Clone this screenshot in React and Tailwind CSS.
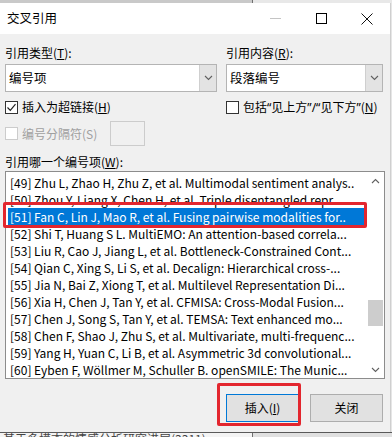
import React from 'react';

const items = [
  '[49] Zhu L, Zhao H, Zhu Z, et al. Multimodal sentiment analys..',
  '[50] Zhou Y, Liang X, Chen H, et al. Triple disentangled repr...',
  '[51] Fan C, Lin J, Mao R, et al. Fusing pairwise modalities for..',
  '[52] Shi T, Huang S L. MultiEMO: An attention-based correla...',
  '[53] Liu R, Cao J, Jiang L, et al. Bottleneck-Constrained Cont...',
  '[54] Qian C, Xing S, Li S, et al. Decalign: Hierarchical cross-...',
  '[55] Jia N, Bai Z, Xiong T, et al. Multilevel Representation Di...',
  '[56] Xia H, Chen J, Tan Y, et al. CFMISA: Cross-Modal Fusion...',
  '[57] Chen J, Song S, Tan Y, et al. TEMSA: Text enhanced mo...',
  '[58] Chen F, Shao J, Zhu S, et al. Multivariate, multi-frequenc...',
  '[59] Yang H, Yuan C, Li B, et al. Asymmetric 3d convolutional...',
  '[60] Eyben F, Wöllmer M, Schuller B. openSMILE: The Munic...',
];

function Chevron({ up }) {
  return (
    <svg width="9" height="6" viewBox="0 0 9 6">
      <path
        d={up ? 'M1 5 L4.5 1.5 L8 5' : 'M1 1 L4.5 4.5 L8 1'}
        fill="none"
        stroke="#606060"
        strokeWidth="1.1"
      />
    </svg>
  );
}

function Select({ value, width }) {
  return (
    <div className={`${width} h-[28px] flex border border-[#b4b4b4] bg-white`}>
      <div className="flex-1 flex items-center pl-[3px] text-[12.5px] text-black">{value}</div>
      <div className="w-[17px] flex items-center justify-center bg-[#e3e3e3] border-l border-[#cfcfcf]">
        <Chevron />
      </div>
    </div>
  );
}

function Checkbox({ checked, disabled }) {
  return (
    <div
      className={`w-[13px] h-[13px] shrink-0 border bg-white flex items-center justify-center ${
        disabled ? 'border-[#cccccc] bg-[#f0f0f0]' : 'border-[#333333]'
      }`}
    >
      {checked && (
        <svg width="11" height="11" viewBox="0 0 11 11">
          <path d="M1.5 5.5 L4.3 8.3 L9.5 2.2" fill="none" stroke="#222" strokeWidth="1.2" />
        </svg>
      )}
    </div>
  );
}

// narrow quote marks, as in the Windows UI font
const Q = ({ children }) => <span style={{ fontFamily: '"Noto Sans", sans-serif' }}>{children}</span>;

export default function App() {
  return (
    <div
      className="w-[392px] h-[437px] overflow-hidden flex flex-col bg-[#e6e6e6] relative text-black"
      style={{ fontFamily: '"Noto Sans CJK SC", "Noto Sans", sans-serif' }}
    >
      <div className="h-[3px] flex shrink-0">
        <div className="w-[252px] bg-[#c9c9c9]" />
        <div className="w-px bg-[#707070]" />
        <div className="flex-1 bg-[#e8e8e8]" />
      </div>

      <div className="h-[429px] w-[391px] flex flex-col border-r border-[#cfcfcf] shrink-0">
        {/* title bar */}
        <div className="h-[31px] bg-white flex items-center shrink-0">
          <span className="pl-[7px] text-[12.5px]">交叉引用</span>
          <div className="ml-auto flex h-full">
            <div className="w-[46px] flex items-center justify-center">
              <div className="w-[11px] h-px bg-[#c4c4c4]" />
            </div>
            <div className="w-[46px] flex items-center justify-center">
              <div className="w-[11px] h-[11px] border border-black" />
            </div>
            <div className="w-[46px] flex items-center justify-center">
              <svg width="12" height="12" viewBox="0 0 12 12">
                <path d="M0.5 0.5 L11.5 11.5 M11.5 0.5 L0.5 11.5" stroke="#111" strokeWidth="1" />
              </svg>
            </div>
          </div>
        </div>

        {/* body */}
        <div className="flex-1 bg-[#f0f0f0] pl-[5px] pt-[10px] flex flex-col text-[12px]">
          <div className="flex gap-[9px]">
            <div className="flex flex-col">
              <div className="h-[17px] leading-[17px]">
                引用类型(<span className="underline">T</span>):
              </div>
              <div className="mt-[3px]">
                <Select value="编号项" width="w-[212px]" />
              </div>
            </div>
            <div className="flex flex-col">
              <div className="h-[17px] leading-[17px]">
                引用内容(<span className="underline">R</span>):
              </div>
              <div className="mt-[3px]">
                <Select value="段落编号" width="w-[157px]" />
              </div>
            </div>
          </div>

          <div className="mt-[7px] h-[16px] flex items-center whitespace-nowrap">
            <div className="w-[221px] flex items-center gap-[4px]">
              <Checkbox checked />
              <span>
                插入为超链接(<span className="underline">H</span>)
              </span>
            </div>
            <div className="flex items-center gap-[4px]">
              <Checkbox />
              <span>
                包括<Q>“</Q>见上方<Q>”/“</Q>见下方<Q>”</Q>(<span className="underline">N</span>)
              </span>
            </div>
          </div>

          <div className="mt-[6px] h-[25px] flex items-center">
            <div className="w-[105px] flex items-center gap-[4px]">
              <Checkbox disabled />
              <span className="text-[#a0a0a0]">编号分隔符(S)</span>
            </div>
            <div className="w-[35px] h-[25px] border border-[#cccccc] bg-[#f0f0f0]" />
          </div>

          <div className="mt-[7px] h-[17px] leading-[17px]">
            引用哪一个编号项(<span className="underline">W</span>):
          </div>

          <div className="mt-px w-[380px] h-[208px] border border-[#8c8c8c] bg-white flex">
            <div className="flex-1 pt-[2px] pl-[2px] pr-[2px] flex flex-col overflow-hidden">
              {items.map((t, i) => (
                <div
                  key={t}
                  className={`h-[17px] leading-[17px] pl-[2px] whitespace-nowrap overflow-hidden text-[12px] ${
                    i === 2 ? 'bg-[#0078d7] text-white' : 'text-black'
                  }`}
                >
                  {t}
                </div>
              ))}
            </div>
            <div className="w-[17px] flex flex-col bg-white">
              <div className="h-[17px] flex items-center justify-center">
                <Chevron up />
              </div>
              <div className="flex-1">
                <div className="mt-[111px] h-[26px] mx-[1px] bg-[#cdcdcd]" />
              </div>
              <div className="h-[17px] flex items-center justify-center">
                <Chevron />
              </div>
            </div>
          </div>

          <div className="mt-[15px] w-[380px] flex justify-end gap-[11px] pr-[2px]">
            <button className="w-[73px] h-[28px] bg-[#e1e1e1] border border-[#0078d7] text-[12px]">
              插入(<span className="underline">I</span>)
            </button>
            <button className="w-[73px] h-[28px] bg-[#e1e1e1] border border-[#adadad] text-[12px]">
              关闭
            </button>
          </div>
        </div>
      </div>

      {/* page behind the dialog */}
      <div className="flex-1 flex border-t border-[#5a5a5a]">
        <div className="w-[252px] bg-[#f4f4f4] overflow-hidden pl-[3px]">
          <div className="text-[12px] leading-[12px] text-[#444] whitespace-nowrap">
            基于多模态的情感分析研究进展(3311)
          </div>
        </div>
        <div className="w-px bg-[#707070]" />
        <div className="flex-1 bg-[#e0e0e0]" />
      </div>

      {/* red annotation boxes */}
      <div className="absolute left-[3px] top-[202px] w-[364px] h-[26px] border-[3px] border-[#e3262e] rounded-[2px]" />
      <div className="absolute left-[217px] top-[383px] w-[84px] h-[43px] border-[3px] border-[#e3262e] rounded-[2px]" />
    </div>
  );
}
